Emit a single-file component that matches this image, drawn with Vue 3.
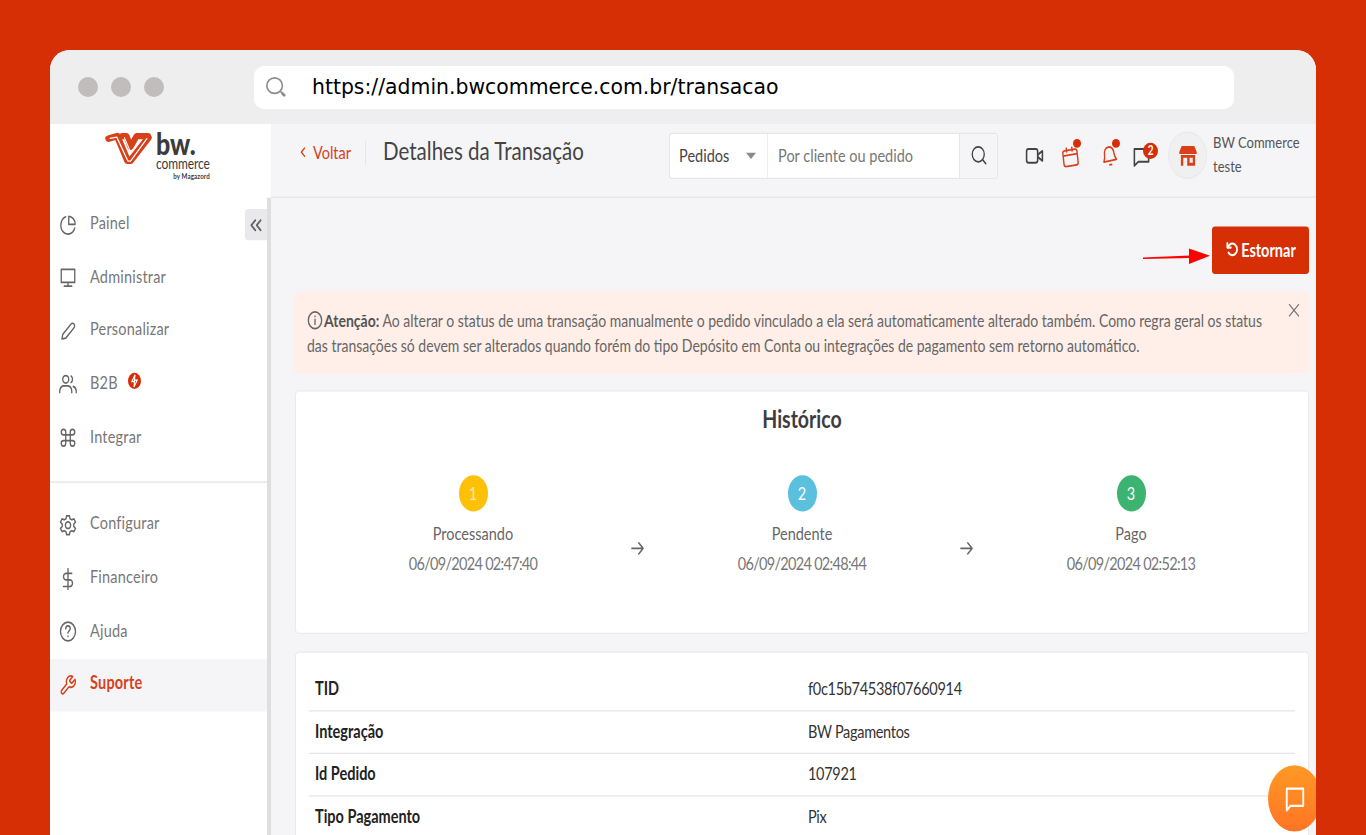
<template>
  <div class="window">
    <div class="browserBar">
      <div class="dots"><i></i><i></i><i></i></div>
      <div class="urlBox">
        <svg class="urlIcon" viewBox="0 0 24 24" fill="none" stroke="#8d8d8d" stroke-width="1.8"><circle cx="10.5" cy="10.5" r="8.5" /><path d="M17 17l1.5 1.5" /><path d="M19 19l2 2" stroke-width="3" stroke-linecap="round" /></svg>
        <span class="urlText">https://admin.bwcommerce.com.br/transacao</span>
      </div>
    </div>

    <!-- the app inside the frame is vertically stretched, same as the original capture -->
    <div class="app">
      <aside class="sidebar">
        <div class="logo">
          <svg class="logoMark" viewBox="0 0 46 33" preserveAspectRatio="none" fill="none" stroke-linejoin="round" stroke-linecap="round">
            <path d="M17 4.500H21L25 15L31 4.500H42" stroke="#d8401a" stroke-width="6" />
            <path d="M3.500 7L12 4.500L22 28.500H25L42.500 6" stroke="#d8401a" stroke-width="6.500" />
            <path d="M5 6.800L11.500 5.500L22.500 29H25L41 7" stroke="#fff" stroke-width="1.200" />
            <path d="M19 6L25 20" stroke="#fff" stroke-width="1" />
          </svg>
          <div class="logoText">
            <span class="logoBw">bw.</span>
            <span class="logoCommerce">commerce</span>
            <span class="logoBy">by Magazord</span>
          </div>
        </div>
        <nav class="nav">
          <button class="collapse" type="button" aria-label="Recolher">
            <svg viewBox="0 0 24 24" fill="none" stroke="#5f6368" stroke-width="2.400" stroke-linecap="round" stroke-linejoin="round"><path d="M11 6l-6 6 6 6" /><path d="M19 6l-6 6 6 6" /></svg>
          </button>
          <template v-for="group in navGroups" :key="group[0].label">
            <a v-for="item in group" :key="item.label" class="navItem" :class="{ active: item.active }">
              <svg class="navIcon" viewBox="0 0 24 24" fill="none" stroke="currentColor" stroke-width="1.8" stroke-linecap="round" stroke-linejoin="round"><path :d="item.d" /></svg>
              <span class="navLabel">{{ item.label }}</span>
              <span v-if="item.badge" class="bolt">
                <svg viewBox="0 0 24 24" fill="none" stroke="#fff" stroke-width="2"><path d="M13 3L7 13h5l-1 8 6-10h-5z" /></svg>
              </span>
            </a>
            <hr v-if="group === navGroups[0]" class="navLine" />
          </template>
        </nav>
      </aside>

      <div class="main">
        <header class="topbar">
          <a class="back">
            <svg viewBox="0 0 24 24" fill="none" stroke="currentColor" stroke-width="3" stroke-linecap="round" stroke-linejoin="round"><path d="M16 4l-8 8 8 8" /></svg>
            Voltar
          </a>
          <h1 class="pageTitle">Detalhes da Transação</h1>
          <div class="search">
            <div class="searchSelect">Pedidos<i class="caret"></i></div>
            <div class="searchInput">Por cliente ou pedido</div>
            <div class="searchBtn">
              <svg viewBox="0 0 24 24" fill="none" stroke="#444" stroke-width="1.800" stroke-linecap="round"><circle cx="11" cy="11" r="8" /><path d="M17 17l4 4" /></svg>
            </div>
          </div>
          <div class="topIcons">
            <svg class="tIcon" viewBox="0 0 24 24" fill="none" stroke="#444" stroke-width="2" stroke-linejoin="round"><rect x="2" y="5" width="14" height="14" rx="2.500" /><path d="M16 11l6-4v10l-6-4" /></svg>
            <span class="tWrap">
              <svg class="tIcon" viewBox="0 0 24 24" fill="none" stroke="#d8401a" stroke-width="1.800" stroke-linejoin="round"><g transform="rotate(-8 12 14)"><rect x="3" y="6" width="18" height="16" rx="2.500" /><path d="M3 11h18" /><path d="M8 3v5M15 3v5" /></g></svg>
              <i class="dot"></i>
            </span>
            <span class="tWrap">
              <svg class="tIcon" viewBox="0 0 24 24" fill="none" stroke="#d8401a" stroke-width="1.800" stroke-linejoin="round"><g transform="rotate(-10 12 12)"><path d="M12 3c-4 0-6 3-6 7 0 4-2 6-2 7h16c0-1-2-3-2-7 0-4-2-7-6-7z" /><path d="M10 21h4" /></g></svg>
              <i class="dot"></i>
            </span>
            <span class="tWrap">
              <svg class="tIcon" viewBox="0 0 24 24" fill="none" stroke="#444" stroke-width="2" stroke-linejoin="round"><path d="M3 5h18v13H8l-5 4z" /></svg>
              <b class="count">2</b>
            </span>
          </div>
          <div class="avatar">
            <svg viewBox="0 0 24 24" fill="#d8401a"><path d="M4 2h16l3 6v2H1V8z" /><path fill-rule="evenodd" d="M3 11h18v11H3zM6 14v8h5v-8zM14 14v5h4v-5z" /></svg>
          </div>
          <div class="account"><span>BW Commerce</span><span>teste</span></div>
        </header>

        <section class="content">
          <div class="actions">
            <svg class="annot" viewBox="0 0 69 14" preserveAspectRatio="none" fill="#f00"><path d="M0 7.800L47 6.200V8.200L0 9z" /><path d="M46 .500L67 6.400L46 13z" /></svg>
            <button class="refund" type="button">
              <svg viewBox="0 0 24 24" fill="none" stroke="#fff" stroke-width="3" stroke-linecap="round" stroke-linejoin="round"><path d="M4 4v6h6" /><path d="M5 10a8 8 0 1 1 1 7" /></svg>
              <span>Estornar</span>
            </button>
          </div>

          <div class="alert">
            <svg class="alertClose" viewBox="0 0 24 24" fill="none" stroke="#777" stroke-width="1.800" stroke-linecap="round"><path d="M4 4l16 16M20 4L4 20" /></svg>
            <p>
              <svg class="infoIcon" viewBox="0 0 24 24" fill="none" stroke="#666" stroke-width="2" stroke-linecap="round"><circle cx="12" cy="12" r="10" /><path d="M12 11v6M12 7v.5" /></svg>
              <b>Atenção:</b> Ao alterar o status de uma transação manualmente o pedido vinculado a ela será automaticamente alterado também. Como regra geral os status das transações só devem ser alterados quando forém do tipo Depósito em Conta ou integrações de pagamento sem retorno automático.
            </p>
          </div>

          <div class="card history">
            <h2>Histórico</h2>
            <div class="steps">
              <template v-for="(step, idx) in steps" :key="step.label">
                <div class="step">
                  <span class="stepNum" :class="step.tone">{{ idx + 1 }}</span>
                  <span class="stepLabel">{{ step.label }}</span>
                  <span class="stepDate">{{ step.date }}</span>
                </div>
                <svg v-if="idx < steps.length - 1" class="stepArrow" viewBox="0 0 24 24" fill="none" stroke="#666" stroke-width="2.200" stroke-linecap="round" stroke-linejoin="round"><path d="M3 12h18M14 5l7 7-7 7" /></svg>
              </template>
            </div>
          </div>

          <div class="card details">
            <div v-for="row in rows" :key="row.label" class="row">
              <span class="rowLabel">{{ row.label }}</span>
              <span class="rowValue">{{ row.value }}</span>
            </div>
          </div>
        </section>
      </div>

      <div class="chat">
        <svg viewBox="0 0 24 24" fill="none" stroke="#fff" stroke-width="2" stroke-linejoin="round"><path d="M3 3h18v15H7l-4 4z" /></svg>
      </div>
    </div>
  </div>
</template>

<script setup>
const navGroups = [
  [
    { label: "Painel", d: "M21 15a9.500 9.500 0 1 1-12-12M13 2.500a8.500 8.500 0 0 1 8.500 8.500H13z" },
    { label: "Administrar", d: "M3 3h18v14H3zM12 17v4M7 21h10" },
    { label: "Personalizar", d: "M4 20l1-5L16 4c1-1 3-1 4 0s1 3 0 4L9 19z" },
    { label: "B2B", badge: true, d: "M9 11a4 4 0 1 0 0-8 4 4 0 0 0 0 8zM1 21v-2a6 6 0 0 1 6-5h4a6 6 0 0 1 6 5v2M16 3.500a4 4 0 0 1 0 7M19 14.500a6 6 0 0 1 4 5V21" },
    { label: "Integrar", d: "M9 9h6v6H9zM9 9H6a3 3 0 1 1 3-3zM15 9V6a3 3 0 1 1 3 3zM15 15h3a3 3 0 1 1-3 3zM9 15v3a3 3 0 1 1-3-3z" },
  ],
  [
    { label: "Configurar", d: "M12 15.500a3.500 3.500 0 1 0 0-7 3.500 3.500 0 0 0 0 7zM10 2h4l.6 3 2.400 1.200 3-1 2 3.500-2.300 2v2.600l2.300 2-2 3.500-3-1-2.400 1.200-.6 3h-4l-.6-3L7 17.800l-3 1-2-3.500 2.300-2v-2.600L2 8.700l2-3.500 3 1 2.400-1.200z" },
    { label: "Financeiro", d: "M12 1v22M17 6H9.500a3.500 3.500 0 0 0 0 7h5a3.500 3.500 0 0 1 0 7H6" },
    { label: "Ajuda", d: "M12 22a10 10 0 1 0 0-20 10 10 0 0 0 0 20zM9 9a3 3 0 0 1 6 0c0 2-3 2.500-3 4.500M12 17v.2" },
    { label: "Suporte", active: true, d: "M14.500 6.500a1 1 0 0 0 0 1.400l1.600 1.600a1 1 0 0 0 1.400 0l3.800-3.800a6 6 0 0 1-7.900 7.900l-6.900 6.900a2.100 2.100 0 0 1-3-3l6.900-6.900a6 6 0 0 1 7.900-7.900z" },
  ],
];

const steps = [
  { label: "Processando", date: "06/09/2024 02:47:40", tone: "yellow" },
  { label: "Pendente", date: "06/09/2024 02:48:44", tone: "blue" },
  { label: "Pago", date: "06/09/2024 02:52:13", tone: "green" },
];

const rows = [
  { label: "TID", value: "f0c15b74538f07660914" },
  { label: "Integração", value: "BW Pagamentos" },
  { label: "Id Pedido", value: "107921" },
  { label: "Tipo Pagamento", value: "Pix" },
];
</script>

<style>
html, body {
  margin: 0;
  height: 100%;
  overflow: hidden;
  background: #d62f05;
}
</style>

<style scoped>
.window {
  margin: 50px 50px 0;
  height: 785px;
  border-radius: 20px 20px 0 0;
  overflow: hidden;
  background: #fff;
  font-family: Lato, "Open Sans", sans-serif;
}

/* browser frame */
.browserBar {
  height: 74px;
  background: #eeeeef;
  display: flex;
  align-items: center;
  padding-left: 28px;
}
.dots {
  display: flex;
  gap: 13px;
}
.dots i {
  width: 20px;
  height: 20px;
  border-radius: 50%;
  background: #c0bdbc;
}
.urlBox {
  margin-left: 90px;
  width: 980px;
  height: 43px;
  background: #fff;
  border-radius: 10px;
  display: flex;
  align-items: center;
}
.urlIcon {
  width: 22px;
  height: 22px;
  margin-left: 11px;
}
.urlText {
  margin-left: 25px;
  font-family: "DejaVu Sans", sans-serif;
  font-size: 20.400px;
  color: #000;
}

/* stretched app */
.app {
  position: relative;
  height: 570px;
  display: flex;
  transform: scaleY(1.25);
  transform-origin: top left;
  background: #f5f5f7;
  overflow: hidden;
}

.sidebar {
  width: 221px;
  flex: none;
  background: #fff;
  display: flex;
  flex-direction: column;
}
.logo {
  height: 59.200px;
  flex: none;
  display: flex;
  padding: 6px 0 0 55px;
  box-sizing: border-box;
  gap: 4px;
}
.logoMark {
  width: 47px;
  height: 27px;
}
.logoText {
  display: flex;
  flex-direction: column;
  color: #3c3c3c;
  line-height: 1;
}
.logoBw {
  font-size: 25px;
  font-weight: 900;
  line-height: 18px;
}
.logoCommerce {
  font-size: 12px;
  line-height: 10px;
  margin-top: 3px;
  letter-spacing: -.1px;
}
.logoBy {
  font-size: 6.200px;
  font-weight: 700;
  text-align: right;
  line-height: 8px;
  margin-top: 1px;
  letter-spacing: .1px;
}

.nav {
  position: relative;
  flex: 1;
  border-right: 4px solid #dedede;
}
.collapse {
  position: absolute;
  top: 9px;
  right: 0;
  width: 22px;
  height: 25px;
  padding: 3px;
  border: 0;
  border-radius: 3px 0 0 3px;
  background: #e9e9eb;
  display: flex;
  align-items: center;
  justify-content: center;
}
.collapse svg {
  width: 16px;
  height: 16px;
}
.navItem {
  height: 42.670px;
  display: flex;
  align-items: center;
  padding-left: 9px;
  color: #777;
  font-size: 14.500px;
  letter-spacing: .2px;
}
.navLabel {
  margin-bottom: 4px;
}
.navItem.active {
  background: #f5f5f7;
  color: #d8401a;
  font-weight: 700;
}
.navIcon {
  width: 18px;
  height: 18px;
  margin-right: 13px;
  color: #666;
  flex: none;
}
.active .navIcon {
  color: #d8401a;
}
.bolt {
  width: 13px;
  height: 13px;
  margin: -5px 0 0 10px;
  border-radius: 50%;
  background: #d62f05;
  display: flex;
}
.navLine {
  margin: 13.200px 0 13px;
  border: 0;
  border-top: 1px solid #e2e2e2;
}

.main {
  flex: 1;
  min-width: 0;
}
.topbar {
  height: 59.200px;
  box-sizing: border-box;
  border-bottom: 1px solid #e3e3e6;
  display: flex;
  align-items: flex-start;
  padding-left: 27px;
}
.back {
  display: flex;
  align-items: center;
  height: 20px;
  margin-top: 12.500px;
  padding-right: 14px;
  border-right: 1px solid #e6e6e8;
  color: #d8401a;
  font-size: 14.500px;
  gap: 5px;
}
.back svg {
  width: 10px;
  height: 13px;
}
.pageTitle {
  margin: 8.500px 0 0 17px;
  width: 286px;
  font-size: 20.500px;
  line-height: 24px;
  font-weight: 400;
  color: #444;
  white-space: nowrap;
}
.search {
  display: flex;
  height: 37px;
  margin-top: 6.500px;
  border: 1px solid #e6e6e8;
  border-radius: 3px;
  background: #fff;
  box-sizing: border-box;
  width: 329px;
  font-size: 14.500px;
  line-height: 34px;
}
.searchSelect {
  width: 98px;
  box-sizing: border-box;
  padding-left: 9px;
  color: #444;
  border-right: 1px solid #eee;
  position: relative;
}
.caret {
  position: absolute;
  right: 11px;
  top: 15px;
  border: 5px solid transparent;
  border-top: 5px solid #8a8a8a;
  border-bottom: 0;
}
.searchInput {
  flex: 1;
  padding-left: 10px;
  color: #777;
}
.searchBtn {
  width: 37px;
  background: #f5f5f7;
  border-left: 1px solid #e6e6e8;
  display: flex;
  align-items: center;
  justify-content: center;
}
.searchBtn svg {
  width: 18px;
  height: 18px;
}
.topIcons {
  display: flex;
  gap: 17px;
  margin: 15.500px 0 0 27px;
  width: 143px;
  flex: none;
}
.tWrap {
  position: relative;
  display: block;
  height: 20px;
}
.tWrap:nth-child(3) {
  margin: 0 -4px 0 3px;
}
.tIcon {
  width: 19px;
  height: 19px;
  display: block;
}
.dot {
  position: absolute;
  top: -4px;
  right: -1px;
  width: 8px;
  height: 7px;
  border-radius: 50%;
  background: #d62f05;
}
.count {
  position: absolute;
  top: -1px;
  left: 11px;
  width: 15px;
  height: 13px;
  border-radius: 50%;
  background: #d62f05;
  color: #fff;
  font-size: 10px;
  line-height: 13px;
  text-align: center;
}
.avatar {
  width: 39px;
  height: 38px;
  margin-top: 6px;
  flex: none;
  border-radius: 50%;
  background: #f0f0f0;
  border: 1px solid #e9e9e9;
  box-sizing: border-box;
  display: flex;
  align-items: center;
  justify-content: center;
}
.avatar svg {
  width: 24px;
  height: 19px;
}
.account {
  margin: 5px 0 0 6px;
  display: flex;
  flex-direction: column;
  font-size: 13px;
  line-height: 19px;
  color: #555;
  white-space: nowrap;
}

.content {
  padding: 23.200px 7px 0 23px;
}
.actions {
  position: relative;
  display: flex;
  justify-content: flex-end;
}
.annot {
  position: absolute;
  right: 97px;
  top: 17px;
  width: 69px;
  height: 14px;
}
.refund {
  width: 97px;
  height: 37.600px;
  border: 0;
  border-radius: 3px;
  background: #d62f05;
  color: #fff;
  font: 700 14.500px Lato, sans-serif;
  display: flex;
  align-items: center;
  justify-content: center;
  gap: 2px;
  padding: 0 0 2px;
}
.refund svg {
  width: 14px;
  height: 14px;
}
.alert {
  position: relative;
  margin-top: 14.400px;
  height: 65.600px;
  box-sizing: border-box;
  padding: 12.500px 28px 0 13px;
  border-radius: 4px;
  background: #ffefe8;
  color: #666;
  font-size: 14px;
  line-height: 20px;
}
.alert p {
  margin: 0;
}
.alert b {
  color: #555;
}
.alertClose {
  position: absolute;
  right: 8px;
  top: 8px;
  width: 14px;
  height: 14px;
}
.infoIcon {
  width: 16px;
  height: 16px;
  vertical-align: -3px;
  margin-right: 1px;
}
.card {
  margin-top: 12.800px;
  background: #fff;
  border: 1px solid #eaeaec;
  border-radius: 4px;
  margin-left: 1px;
  box-sizing: border-box;
}
.history {
  height: 195.200px;
}
.history h2 {
  margin: 10px 0 0;
  text-align: center;
  font-size: 19.500px;
  line-height: 24px;
  font-weight: 700;
  color: #3d3d3d;
}
.steps {
  display: flex;
  justify-content: center;
  margin-top: 33px;
}
.step {
  width: 300px;
  display: flex;
  flex-direction: column;
  align-items: center;
  color: #666;
  font-size: 14.500px;
}
.stepNum {
  width: 29px;
  height: 29px;
  border-radius: 50%;
  color: #fff;
  text-align: center;
  line-height: 29px;
}
.yellow { background: #ffc107; color: #ffe9b0; }
.blue { background: #5bc0de; }
.green { background: #3cb371; }
.stepLabel {
  margin-top: 8px;
  line-height: 20px;
}
.stepDate {
  margin-top: 4px;
  line-height: 20px;
  color: #777;
  letter-spacing: -.7px;
}
.stepArrow {
  width: 15px;
  height: 15px;
  margin: 51.600px 7px 0;
  flex: none;
}
.details {
  margin-top: 14.400px;
  padding: 12.400px 13px 0;
}
.row {
  display: flex;
  height: 34px;
  align-items: center;
  border-bottom: 1px solid #e6e6e6;
  font-size: 14.500px;
  color: #333;
  box-sizing: border-box;
  padding: 0 0 1px 6px;
}
.rowLabel {
  width: 493px;
  font-weight: 700;
  color: #222;
}
.rowValue {
  letter-spacing: -.3px;
}
.chat {
  position: absolute;
  left: 1218px;
  top: 513px;
  width: 53px;
  height: 53px;
  border-radius: 50%;
  background: linear-gradient(#ff9a24, #ff7425);
  display: flex;
  align-items: center;
  justify-content: center;
}
.chat svg {
  width: 22px;
  height: 22px;
}
</style>
